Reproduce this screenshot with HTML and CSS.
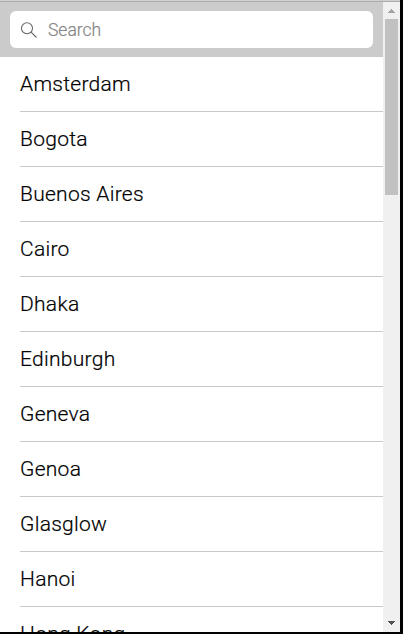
FILE: index.html
```html
<!DOCTYPE html>
<html lang="en">
<head>
<meta charset="utf-8">
<title>Cities</title>
<link rel="stylesheet" href="styles.css">
</head>
<body>
<div class="window">
  <main class="content">
    <div class="toolbar">
      <label class="search">
        <svg class="search-icon" viewBox="0 0 18 18"><circle cx="7" cy="7.2" r="5.5"/><path d="M11 11.2l5.5 5.3"/></svg>
        <span class="placeholder">Search</span>
      </label>
    </div>
    <ul class="list">
      <li>Amsterdam</li>
      <li>Bogota</li>
      <li>Buenos Aires</li>
      <li>Cairo</li>
      <li>Dhaka</li>
      <li>Edinburgh</li>
      <li>Geneva</li>
      <li>Genoa</li>
      <li>Glasglow</li>
      <li>Hanoi</li>
      <li>Hong Kong</li>
    </ul>
  </main>
  <div class="scrollbar">
    <svg class="arrow" viewBox="0 0 17 17" shape-rendering="crispEdges"><path d="M8 7h1v1h1v1h1v1h1v1H5v-1h1V9h1V8h1z"/></svg>
    <div class="thumb"></div>
    <svg class="arrow arrow-down" viewBox="0 0 17 17" shape-rendering="crispEdges"><path d="M5 6h7v1h-1v1h-1v1H9v1H8V9H7V8H6V7H5z"/></svg>
  </div>
</div>
</body>
</html>
```
FILE: styles.css
```css
* { box-sizing: border-box; }
body { margin: 0; background: #000; font-family: Roboto, sans-serif; overflow: hidden; }
.window { display: flex; width: 400px; height: 632px; background: #fff; border-top: 1px solid #d0d0d0; overflow: hidden; }
.content { flex: 1; overflow: hidden; }
.toolbar { height: 56px; padding: 9px 10px 10px; border-top: 1px solid #a9adad; background: #cbcbcb; }
.search { display: flex; align-items: center; height: 37px; padding-left: 10px; border-radius: 6px; background: #fff; }
.search-icon { width: 18px; height: 18px; fill: none; stroke: #666; stroke-width: 1.1; }
.placeholder { margin-left: 10px; font-size: 17.5px; font-weight: 300; color: #858585; -webkit-text-stroke: 0.2px #858585; }
.list { margin: 0; padding: 0 0 0 20px; list-style: none; }
.list li { height: 55px; border-bottom: 1px solid #c8c8ca; font-size: 21px; font-weight: 300; line-height: 54px; letter-spacing: 0.28px; color: #000; -webkit-text-stroke: 0.2px #000; }
.scrollbar { display: flex; flex-direction: column; width: 17px; background: #f0f0f0; border-top: 1px solid #a9adad; }
.arrow { width: 17px; height: 17px; fill: #a3a3a3; flex: none; }
.thumb { width: 13px; height: 176px; margin: 0 2px; background: #c1c1c1; }
.arrow-down { margin-top: auto; fill: #505050; }
```
